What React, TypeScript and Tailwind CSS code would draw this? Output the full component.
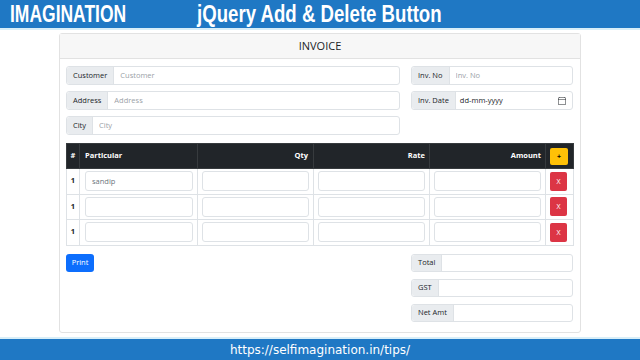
import type { ReactNode } from "react";

function Group({
  label,
  placeholder,
  tall = true,
  children,
}: {
  label: string;
  placeholder?: string;
  tall?: boolean;
  children?: ReactNode;
}) {
  return (
    <div
      className={
        (tall ? "h-[19px] " : "h-[18px] ") +
        "flex rounded-[3px] border border-[#dee2e6] bg-white text-[7.5px] text-[#212529]"
      }
    >
      <span className="flex items-center rounded-l-[3px] border-r border-[#dee2e6] bg-[#e9ecef] px-[6px]">
        {label}
      </span>
      {children ?? (
        <input
          className="min-w-0 flex-1 bg-transparent px-[6px] text-[7.5px] outline-none placeholder:text-[#9ba1a7]"
          placeholder={placeholder}
        />
      )}
    </div>
  );
}

function CellInput({ value }: { value?: string }) {
  return (
    <input
      defaultValue={value}
      className="h-[20px] w-full rounded-[3px] border border-[#dee2e6] bg-white px-[6px] text-[7.5px] text-[#6c757d] outline-none"
    />
  );
}

const rows = ["sandip", "", ""];

export default function App() {
  return (
    <div className="flex h-[360px] w-[640px] flex-col overflow-hidden bg-white font-['Open_Sans','Noto_Sans',sans-serif] text-[#212529]">
      {/* banner */}
      <div className="flex h-[28px] shrink-0 items-center whitespace-nowrap bg-[#1f78c4] font-['Liberation_Sans',sans-serif] text-[23px] font-bold leading-none text-white">
        <span className="ml-[10px] inline-block w-[187px] origin-left scale-x-[0.76]">IMAGINATION</span>
        <span className="inline-block origin-left scale-x-[0.81]">jQuery Add &amp; Delete Button</span>
      </div>
      <div className="h-[2px] shrink-0 bg-[#d8eef8]" />

      {/* card */}
      <div className="ml-[59px] mt-[3px] w-[522px] rounded-[3px] border border-[#e2e2e2]">
        <div className="flex h-[25px] items-center justify-center border-b border-[#e2e2e2] bg-[#f7f7f7] text-[11px]">
          INVOICE
        </div>

        <div className="px-[6px] pb-[10px] pt-[7px]">
          <div className="grid grid-cols-[334px_162px] gap-x-[11px]">
            <div className="flex flex-col gap-[6px]">
              <Group label="Customer" placeholder="Customer" />
              <Group label="Address" placeholder="Address" />
              <Group label="City" placeholder="City" />
            </div>
            <div className="flex flex-col gap-[6px]">
              <Group label="Inv. No" placeholder="Inv. No" />
              <Group label="Inv. Date">
                <div className="flex flex-1 items-center justify-between pl-[4px] pr-[6px]">
                  <span>dd-mm-yyyy</span>
                  <svg width="8" height="8" viewBox="0 0 16 16" fill="#212529">
                    <path d="M3.5 0a.5.5 0 0 1 .5.5V1h8V.5a.5.5 0 0 1 1 0V1h1a2 2 0 0 1 2 2v11a2 2 0 0 1-2 2H2a2 2 0 0 1-2-2V3a2 2 0 0 1 2-2h1V.5a.5.5 0 0 1 .5-.5zM2 2a1 1 0 0 0-1 1v1h14V3a1 1 0 0 0-1-1H2zm13 3H1v9a1 1 0 0 0 1 1h12a1 1 0 0 0 1-1V5z" />
                  </svg>
                </div>
              </Group>
            </div>
          </div>

          {/* items table */}
          <table className="mt-[8px] w-[507px] table-fixed border-collapse text-[7.5px]">
            <colgroup>
              <col className="w-[13px]" />
              <col className="w-[118px]" />
              <col className="w-[116px]" />
              <col className="w-[116px]" />
              <col className="w-[116px]" />
              <col className="w-[28px]" />
            </colgroup>
            <thead>
              <tr className="h-[25px] bg-[#212529] font-bold text-white">
                <th className="border border-[#373b3e] text-center">#</th>
                <th className="border border-[#373b3e] px-[5px] text-left">Particular</th>
                <th className="border border-[#373b3e] px-[5px] text-right">Qty</th>
                <th className="border border-[#373b3e] px-[4px] text-right">Rate</th>
                <th className="border border-[#373b3e] px-[4px] text-right">Amount</th>
                <th className="border border-[#373b3e] px-[4px]">
                  <button className="flex h-[17px] w-[18px] items-center justify-center rounded-[2px] bg-[#ffc107] text-[7px] leading-none text-black">
                    +
                  </button>
                </th>
              </tr>
            </thead>
            <tbody>
              {rows.map((v, i) => (
                <tr key={i} className="h-[25.5px]">
                  <td className="border border-[#dee2e6] pt-[6px] text-center align-top font-bold">1</td>
                  <td className="border border-[#dee2e6] pl-[5px] pr-[4px]">
                    <CellInput value={v} />
                  </td>
                  <td className="border border-[#dee2e6] px-[4px]">
                    <CellInput />
                  </td>
                  <td className="border border-[#dee2e6] px-[4px]">
                    <CellInput />
                  </td>
                  <td className="border border-[#dee2e6] px-[4px]">
                    <CellInput />
                  </td>
                  <td className="border border-[#dee2e6] px-[4px]">
                    <button className="flex h-[19px] w-[17px] items-center justify-center rounded-[2px] bg-[#dc3545] text-[7px] leading-none text-white">
                      X
                    </button>
                  </td>
                </tr>
              ))}
            </tbody>
          </table>

          <div className="mt-[8px] flex items-start justify-between">
            <button className="h-[18px] w-[28px] rounded-[3px] bg-[#0d6efd] text-[7.5px] text-white">
              Print
            </button>
            <div className="mr-[1px] flex w-[162px] flex-col gap-[7px]">
              <Group label="Total" tall={false} />
              <Group label="GST" tall={false} />
              <Group label="Net Amt" tall={false} />
            </div>
          </div>
        </div>
      </div>

      <div className="mt-auto flex h-[23px] shrink-0 items-center justify-center border-t-2 border-[#d8eef8] bg-[#1f78c4] font-['DejaVu_Sans',sans-serif] text-[12px] text-white">
        https://selfimagination.in/tips/
      </div>
    </div>
  );
}
